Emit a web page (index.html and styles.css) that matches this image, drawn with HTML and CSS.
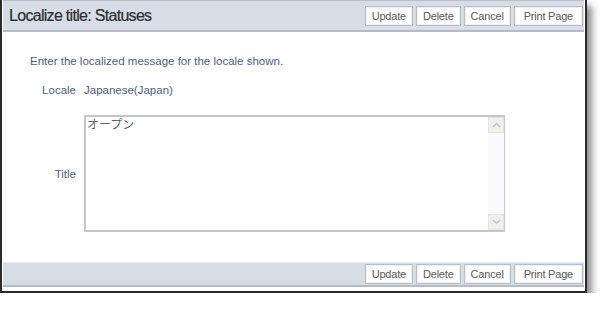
FILE: index.html
```html
<!DOCTYPE html>
<html lang="en">
<head>
	<meta charset="UTF-8">
	<title>Localize title: Statuses</title>
	<link rel="stylesheet" href="styles.css">
</head>
<body>
<div class="frame">
	<div class="bar header">
		<h1 class="title">Localize title: Statuses</h1>
		<div class="buttons">
			<button class="btn">Update</button>
			<button class="btn">Delete</button>
			<button class="btn">Cancel</button>
			<button class="btn">Print Page</button>
		</div>
	</div>

	<div class="content">
		<p class="intro">Enter the localized message for the locale shown.</p>

		<div class="form">
			<div class="label">Locale</div>
			<div class="value">Japanese(Japan)</div>

			<div class="label title-label">Title</div>
			<div class="textbox">
				<div class="textbox-text">オープン</div>
				<div class="scrollbar">
					<div class="arrow">
						<svg width="9" height="6" viewBox="0 0 9 6"><path d="M1 5 L4.5 1.5 L8 5" fill="none" stroke="#c8c8be" stroke-width="1.5"/></svg>
					</div>
					<div class="track"></div>
					<div class="arrow">
						<svg width="9" height="6" viewBox="0 0 9 6"><path d="M1 1 L4.5 4.5 L8 1" fill="none" stroke="#c8c8be" stroke-width="1.5"/></svg>
					</div>
				</div>
			</div>
		</div>
	</div>

	<div class="bar footer">
		<div class="buttons">
			<button class="btn">Update</button>
			<button class="btn">Delete</button>
			<button class="btn">Cancel</button>
			<button class="btn">Print Page</button>
		</div>
	</div>
</div>
</body>
</html>
```

FILE: styles.css
```css
body {
	margin: 0;
	background: #fff;
	font-family: "Liberation Sans", Arial, sans-serif;
	font-size: 11.5px;
}

/* OUTER WINDOW FRAME */
.frame {
	width: 581px;
	border: 2px solid #2b2b2b;
	border-top: 0;
	padding: 0 1px 4px 1px;
	background: #fff;
	box-shadow: 5px 6px 7px rgba(0, 0, 0, 0.45);
}

/* TOOLBARS */
.bar {
	display: flex;
	align-items: center;
	background: #d6dde7;
	border-bottom: 2px solid #b6bcc7;
}

.header {
	height: 29px;
	border-top: 1px solid #b9bfc9;
}

.footer {
	height: 22px;
	margin-top: 30px;
	border-top: 1px solid #e6eaf0;
}

.title {
	margin: 0 0 0 6px;
	font-size: 16px;
	letter-spacing: -0.7px;
	font-weight: normal;
	color: #2e2e2e;
	-webkit-text-stroke: 0.2px #2e2e2e;
}

.buttons {
	display: flex;
	gap: 3px;
	margin-left: auto;
	margin-right: 1px;
}

.btn {
	height: 20px;
	padding: 0 6px;
	background: #fff;
	border: 1px solid #b9bec8;
	box-shadow: inset 0 0 0 1px #eef0f4;
	font-family: "Liberation Sans", Arial, sans-serif;
	font-size: 11px;
	letter-spacing: -0.2px;
	color: #5a5a5a;
}

.btn:last-child {
	padding: 0 9px;
}

/* BODY */
.content {
	padding: 23px 0 0 27px;
	color: #4b6288;
}

.intro {
	margin: 0 0 17px 0;
}

.form {
	display: grid;
	grid-template-columns: 46px 421px;
	column-gap: 8px;
	row-gap: 19px;
	align-items: center;
}

.label {
	text-align: right;
}

/* FAKE TEXTAREA */
.textbox {
	display: flex;
	height: 113px;
	border: 2px solid #c3c6cc;
	border-right-width: 1px;
	background: #fff;
}

.textbox-text {
	flex: 1;
	padding: 0 0 0 1px;
	font-family: "Noto Sans CJK JP", sans-serif;
	font-size: 12px;
	line-height: 14px;
	color: #666;
}

.scrollbar {
	display: flex;
	flex-direction: column;
	width: 16px;
	background: #fbfbfd;
}

.arrow {
	display: flex;
	align-items: center;
	justify-content: center;
	height: 16px;
	background: #f0f0ea;
	border: 1px solid #e6e6de;
	box-sizing: border-box;
}

.track {
	flex: 1;
}
```
